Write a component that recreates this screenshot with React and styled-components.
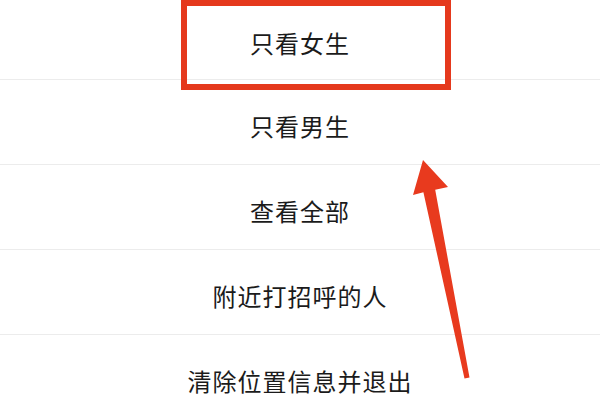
import React from 'react';
import styled, { createGlobalStyle } from 'styled-components';

const GlobalStyle = createGlobalStyle`
  html, body {
    margin: 0;
    padding: 0;
    background: #fff;
    overflow: hidden;
  }
  body {
    font-family: "Noto Sans CJK SC", "Noto Sans", sans-serif;
  }
`;

const options = ['只看女生', '只看男生', '查看全部', '附近打招呼的人', '清除位置信息并退出'];

export default function App() {
  return (
    <>
      <GlobalStyle />
      <Screen>
        <Sheet>
          {options.map((label, index) => (
            <Item key={label} first={index === 0}>
              {label}
            </Item>
          ))}
        </Sheet>
        <Highlight />
        <Arrow viewBox="0 0 600 416" aria-hidden="true">
          <polygon
            points="423,160 448,187 435.2,189.8 469.5,377.5 464.5,378.5 423.4,192.2 413,195"
            fill="#e83a1e"
          />
        </Arrow>
      </Screen>
    </>
  );
}

const Screen = styled.div`
  position: relative;
  width: 600px;
  height: 416px;
  overflow: hidden;
  background: #fff;
`;

const Sheet = styled.ul`
  list-style: none;
  margin: 0;
  padding: 0;
  display: flex;
  flex-direction: column;
`;

const Item = styled.li`
  height: ${(p) => (p.first ? 80 : 85)}px;
  box-sizing: border-box;
  padding-top: 6px;
  display: flex;
  align-items: center;
  justify-content: center;
  border-bottom: 1px solid #ececec;
  font-size: 24px;
  letter-spacing: 1px;
  color: #1b1b1b;
`;

const Highlight = styled.div`
  position: absolute;
  left: 181px;
  top: 0;
  width: 270px;
  height: 90px;
  box-sizing: border-box;
  border: 6px solid #e5391d;
  pointer-events: none;
`;

const Arrow = styled.svg`
  position: absolute;
  inset: 0;
  width: 600px;
  height: 416px;
  pointer-events: none;
`;
